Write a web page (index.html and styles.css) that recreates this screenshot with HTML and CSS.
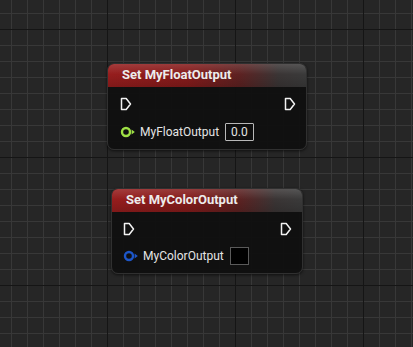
FILE: index.html
```html
<!DOCTYPE html>
<html lang="en">
<head>
    <meta charset="UTF-8">
    <meta name="viewport" content="width=device-width, initial-scale=1.0">
    <title>Blueprint - Set Variables</title>
    <link rel="stylesheet" href="styles.css">
</head>
<body>
    <div class="graph">
        <!-- Set float node -->
        <div class="node node-float">
            <div class="node-header">Set MyFloatOutput</div>
            <div class="node-body">
                <div class="exec-row">
                    <svg class="exec-pin" viewBox="0 0 12 14"><path d="M1.5 1.5 H6.2 L10.5 7 L6.2 12.5 H1.5 Z"/></svg>
                    <svg class="exec-pin" viewBox="0 0 12 14"><path d="M1.5 1.5 H6.2 L10.5 7 L6.2 12.5 H1.5 Z"/></svg>
                </div>
                <div class="data-row">
                    <svg class="data-pin float" viewBox="0 0 16 12"><circle cx="6" cy="6" r="4"/><path class="arrow" d="M11.6 3.4 L14.8 6 L11.6 8.6 Z"/></svg>
                    <span class="pin-label">MyFloatOutput</span>
                    <span class="value-box">0.0</span>
                </div>
            </div>
        </div>

        <!-- Set color node -->
        <div class="node node-color">
            <div class="node-header">Set MyColorOutput</div>
            <div class="node-body">
                <div class="exec-row">
                    <svg class="exec-pin" viewBox="0 0 12 14"><path d="M1.5 1.5 H6.2 L10.5 7 L6.2 12.5 H1.5 Z"/></svg>
                    <svg class="exec-pin" viewBox="0 0 12 14"><path d="M1.5 1.5 H6.2 L10.5 7 L6.2 12.5 H1.5 Z"/></svg>
                </div>
                <div class="data-row">
                    <svg class="data-pin color" viewBox="0 0 16 12"><circle cx="6" cy="6" r="4"/><path class="arrow" d="M11.6 3.4 L14.8 6 L11.6 8.6 Z"/></svg>
                    <span class="pin-label">MyColorOutput</span>
                    <span class="swatch"></span>
                </div>
            </div>
        </div>
    </div>
</body>
</html>
```

FILE: styles.css
```css
* {
    margin: 0;
    padding: 0;
    box-sizing: border-box;
}

body {
    font-family: Roboto, 'Liberation Sans', sans-serif;
    background: #262626;
    overflow: hidden;
}

.graph {
    position: relative;
    width: 413px;
    height: 347px;
    background-color: #262626;
    background-image:
        linear-gradient(#151515 1px, transparent 1px),
        linear-gradient(90deg, #151515 1px, transparent 1px),
        linear-gradient(#383838 1px, transparent 1px),
        linear-gradient(90deg, #383838 1px, transparent 1px);
    background-size: 128px 128px, 128px 128px, 16px 16px, 16px 16px;
    background-position: 107px 29px, 107px 29px, 11px 13px, 11px 13px;
}

.node {
    position: absolute;
    background: rgba(16, 16, 16, 0.96);
    border: 1px solid #303030;
    border-radius: 7px;
    box-shadow: 0 1px 3px rgba(0, 0, 0, 0.6);
    overflow: hidden;
}

.node-float { left: 107px; top: 63px; width: 200px; height: 87px; }
.node-color { left: 111px; top: 188px; width: 192px; height: 86px; }

.node-header {
    height: 23px;
    padding: 3px 0 0 14px;
    color: #ececec;
    font-size: 13px;
    font-weight: bold;
    background:
        linear-gradient(180deg, rgba(255, 255, 255, 0.14) 0%, rgba(255, 255, 255, 0) 45%, rgba(0, 0, 0, 0.15) 100%),
        linear-gradient(90deg, #961d1d 0%, #851b1b 40%, #5e2121 66%, #3a3535 86%, #3a3a3a 100%);
}

.node-body {
    padding: 10px 10px 0 12px;
}

.node-color .node-body { padding-left: 11px; }

.exec-row {
    display: flex;
    justify-content: space-between;
    height: 14px;
}

.exec-pin {
    width: 12px;
    height: 14px;
}

.exec-pin path {
    fill: none;
    stroke: #f2f2f2;
    stroke-width: 1.5;
    stroke-linejoin: round;
}

.data-row {
    display: flex;
    align-items: center;
    height: 18px;
    margin-top: 12px;
}

.node-color .data-row { margin-top: 11px; }

.data-pin {
    width: 16px;
    height: 12px;
    margin-right: 4px;
}

.data-pin circle {
    fill: none;
    stroke-width: 2.4;
}

.data-pin.float circle { stroke: #9ee045; }
.data-pin.float .arrow { fill: #9ee045; }
.data-pin.color circle { stroke: #1d56c8; }
.data-pin.color .arrow { fill: #1d56c8; }

.pin-label {
    color: #e4e4e4;
    font-size: 12px;
    margin-right: 6px;
}

.value-box {
    border: 1px solid #b8b8b8;
    border-radius: 1px;
    color: #e4e4e4;
    font-size: 12px;
    line-height: 16px;
    padding: 0 5px;
    background: #0e0e0e;
}

.swatch {
    width: 19px;
    height: 18px;
    background: #000;
    border: 1px solid #5a5a5a;
}
```
